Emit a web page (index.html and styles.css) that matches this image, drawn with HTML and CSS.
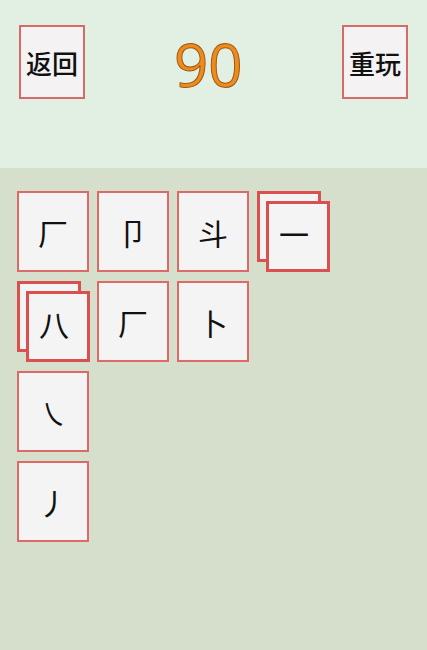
FILE: index.html
```html
<!DOCTYPE html>
<html lang="zh">
<head>
<meta charset="utf-8">
<link rel="stylesheet" href="styles.css">
</head>
<body>
<div class="header">
  <div class="btn">返回</div>
  <div class="score">90</div>
  <div class="btn btn-right">重玩</div>
</div>
<div class="board">
  <div class="row">
    <div class="card">厂</div>
    <div class="card">卩</div>
    <div class="card">斗</div>
    <div class="stack">
      <div class="card small back"></div>
      <div class="card small front">一</div>
    </div>
  </div>
  <div class="row">
    <div class="stack">
      <div class="card small back"></div>
      <div class="card small front">八</div>
    </div>
    <div class="card">厂</div>
    <div class="card">卜</div>
  </div>
  <div class="row">
    <div class="card">㇏</div>
  </div>
  <div class="row">
    <div class="card">丿</div>
  </div>
</div>
</body>
</html>
```
FILE: styles.css
```css
html, body {
  margin: 0;
  padding: 0;
}
body {
  width: 427px;
  height: 650px;
  background: #d5dfcb;
  font-family: "Noto Sans CJK SC", "Noto Sans", sans-serif;
  overflow: hidden;
}
.header {
  height: 168px;
  box-sizing: border-box;
  background: #e2f0e4;
  display: flex;
  align-items: flex-start;
  padding: 25px 19px 0 19px;
}
.btn {
  width: 66px;
  height: 74px;
  box-sizing: border-box;
  border: 2px solid #d46a6a;
  background: #f4f2f3;
  display: flex;
  align-items: center;
  justify-content: center;
  font-size: 26px;
  font-weight: 500;
  color: #111;
}
.btn-right {
  margin-left: auto;
}
.score {
  margin-left: 89px;
  height: 74px;
  padding-top: 2px;
  line-height: 74px;
  font-family: "Open Sans", "Noto Sans", sans-serif;
  font-size: 60px;
  font-weight: 500;
  color: #f08a18;
  -webkit-text-stroke: 1px #9a5a1c;
}
.board {
  padding: 23px 0 0 17px;
  display: flex;
  flex-direction: column;
  gap: 9px;
}
.row {
  display: flex;
  gap: 8px;
}
.card {
  width: 72px;
  height: 81px;
  box-sizing: border-box;
  border: 2px solid #dc6a68;
  background: #f4f4f4;
  display: flex;
  align-items: center;
  justify-content: center;
  font-size: 30px;
  font-weight: 400;
  color: #111;
  line-height: 1;
}
.stack {
  width: 72px;
  height: 81px;
  position: relative;
}
.card.small {
  position: absolute;
  width: 64px;
  height: 71px;
  border: 3px solid #d9504e;
}
.card.back {
  left: 0;
  top: 0;
}
.card.front {
  right: -1px;
  bottom: 0;
  padding: 0 8px 8px 0;
}
```
